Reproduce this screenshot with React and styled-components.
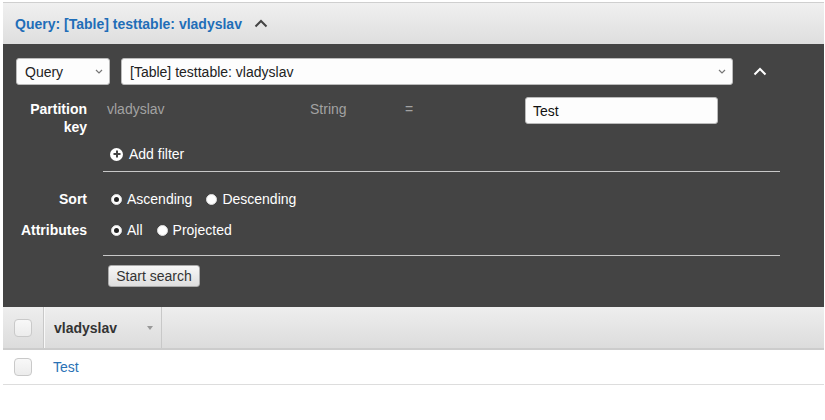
import React from "react";
import styled, { createGlobalStyle } from "styled-components";

const GlobalStyle = createGlobalStyle`
  body {
    margin: 0;
    background: #fff;
    font-family: "Liberation Sans", Arial, sans-serif;
    font-size: 14px;
  }
`;

// Layout
const Page = styled.div`
  padding: 2px 1px 0 3px;
`;

const PanelHeader = styled.div`
  height: 41px;
  border-top: 1px solid #cfcfcf;
  background: linear-gradient(#f0f0f0, #dedede);
  display: flex;
  align-items: center;
  padding-left: 12px;
  gap: 12px;
`;

const Title = styled.span`
  color: #1f6eb8;
  font-weight: bold;
  font-size: 14px;
`;

const Chevron = styled.svg`
  width: 14px;
  height: 9px;
  display: block;
`;

const Dark = styled.div`
  background: #444;
  padding: 14px 0 20px 0;
`;

const SelectRow = styled.div`
  display: flex;
  align-items: center;
  padding-left: 13px;
  gap: 11px;
`;

const Select = styled.div`
  width: ${(p) => p.width}px;
  height: 27px;
  box-sizing: border-box;
  background: #fdfdfd;
  border: 1px solid #bbb;
  border-radius: 3px;
  display: flex;
  align-items: center;
  justify-content: space-between;
  padding: 0 6px 0 8px;
  color: #222;
`;

const CollapseBtn = styled.div`
  margin-left: 8px;
  width: 16px;
  display: flex;
  justify-content: center;
`;

const FormRow = styled.div`
  display: grid;
  grid-template-columns: 84px 677px;
  column-gap: 16px;
  margin-top: ${(p) => p.top || 0}px;
  align-items: ${(p) => (p.start ? "start" : "center")};
`;

const Label = styled.div`
  color: #fff;
  font-weight: bold;
  text-align: right;
  line-height: 18px;
  padding-top: ${(p) => p.pad || 0}px;
`;

const KeyRow = styled.div`
  display: grid;
  grid-template-columns: 203px 95px 120px 193px;
  align-items: start;
  padding-left: 4px;
`;

const Muted = styled.span`
  color: #a2a2a2;
  line-height: 18px;
  padding-top: 3px;
`;

const TextInput = styled.div`
  height: 27px;
  box-sizing: border-box;
  background: #fdfdfd;
  border: 1px solid #bbb;
  border-radius: 3px;
  display: flex;
  align-items: center;
  padding-left: 7px;
  color: #111;
`;

const AddFilter = styled.div`
  display: flex;
  align-items: center;
  gap: 6px;
  color: #fff;
  line-height: 18px;
  padding-left: 7px;
`;

const PlusIcon = styled.span`
  width: 13px;
  height: 13px;
  border-radius: 50%;
  background: #fff;
  position: relative;
  &::before,
  &::after {
    content: "";
    position: absolute;
    background: #444;
    left: 50%;
    top: 50%;
    transform: translate(-50%, -50%);
  }
  &::before {
    width: 7px;
    height: 2px;
  }
  &::after {
    width: 2px;
    height: 7px;
  }
`;

const Rule = styled.div`
  height: 1px;
  background: #c8c8c8;
`;

const Radios = styled.div`
  display: flex;
  align-items: center;
  padding-left: 8px;
  color: #fff;
  line-height: 18px;
`;

const RadioItem = styled.label`
  display: flex;
  align-items: center;
  gap: 5px;
  margin-right: 14px;
`;

const Radio = styled.span`
  width: 11px;
  height: 11px;
  box-sizing: border-box;
  border-radius: 50%;
  background: #fff;
  border: 1px solid #ddd;
  position: relative;
  ${(p) =>
    p.checked &&
    `
    &::after {
      content: "";
      position: absolute;
      left: 2px; top: 2px;
      width: 5px; height: 5px;
      border-radius: 50%;
      background: #222;
    }
  `}
`;

const Button = styled.button`
  margin-left: 5px;
  width: 92px;
  height: 22px;
  border: 1px solid #aaa;
  border-radius: 3px;
  background: linear-gradient(#f7f7f7, #dedede);
  color: #333;
  font-family: inherit;
  font-size: 14px;
  padding: 0;
`;

const ButtonRow = styled.div`
  margin-top: 9px;
`;

// Table
const TableHead = styled.div`
  height: 41px;
  background: linear-gradient(#eeeeee, #dcdcdc);
  border-bottom: 2px solid #cccccc;
  display: flex;
  align-items: stretch;
`;

const CheckCell = styled.div`
  width: 40px;
  display: flex;
  align-items: center;
  justify-content: center;
  border-right: ${(p) => (p.head ? "1px solid #c8c8c8" : "none")};
  box-shadow: ${(p) => (p.head ? "1px 0 0 #f8f8f8" : "none")};
`;

const Checkbox = styled.span`
  width: 18px;
  height: 18px;
  box-sizing: border-box;
  border: 1px solid #c9c9c9;
  border-radius: 4px;
  background: linear-gradient(#f8f8f8, #ececec);
`;

const HeadCell = styled.div`
  width: 118px;
  display: flex;
  align-items: center;
  justify-content: space-between;
  padding: 0 8px 0 10px;
  box-sizing: border-box;
  border-right: 1px solid #c8c8c8;
  font-weight: bold;
  color: #333;
`;

const Caret = styled.span`
  width: 0;
  height: 0;
  border-left: 3px solid transparent;
  border-right: 3px solid transparent;
  border-top: 4px solid #999;
`;

const BodyRow = styled.div`
  height: 34px;
  border-bottom: 1px solid #dddddd;
  display: flex;
  align-items: center;
`;

const LinkCell = styled.span`
  padding-left: 10px;
  color: #2a72b5;
`;

const Down = () => (
  <svg width="8" height="5" viewBox="0 0 8 5">
    <path d="M1 1l3 3 3-3" fill="none" stroke="#777" strokeWidth="1.2" />
  </svg>
);

const App = () => {
  return (
    <Page>
      <GlobalStyle />
      <PanelHeader>
        <Title>Query: [Table] testtable: vladyslav</Title>
        <Chevron viewBox="0 0 14 9">
          <path d="M1.5 7.5L7 2l5.5 5.5" fill="none" stroke="#444" strokeWidth="2" />
        </Chevron>
      </PanelHeader>

      <Dark>
        <SelectRow>
          <Select width={94}>
            Query <Down />
          </Select>
          <Select width={612}>
            [Table] testtable: vladyslav <Down />
          </Select>
          <CollapseBtn>
            <Chevron viewBox="0 0 14 9">
              <path d="M1.5 7.5L7 2l5.5 5.5" fill="none" stroke="#fff" strokeWidth="2" />
            </Chevron>
          </CollapseBtn>
        </SelectRow>

        <FormRow top={12} start>
          <Label pad={3}>
            Partition
            <br />
            key
          </Label>
          <KeyRow>
            <Muted>vladyslav</Muted>
            <Muted>String</Muted>
            <Muted>=</Muted>
            <TextInput>Test</TextInput>
          </KeyRow>
        </FormRow>

        <FormRow top={9}>
          <span />
          <AddFilter>
            <PlusIcon />
            Add filter
          </AddFilter>
        </FormRow>

        <FormRow top={8}>
          <span />
          <Rule />
        </FormRow>

        <FormRow top={18}>
          <Label>Sort</Label>
          <Radios>
            <RadioItem>
              <Radio checked />
              Ascending
            </RadioItem>
            <RadioItem>
              <Radio />
              Descending
            </RadioItem>
          </Radios>
        </FormRow>

        <FormRow top={13}>
          <Label>Attributes</Label>
          <Radios>
            <RadioItem>
              <Radio checked />
              All
            </RadioItem>
            <RadioItem>
              <Radio />
              Projected
            </RadioItem>
          </Radios>
        </FormRow>

        <FormRow top={16}>
          <span />
          <Rule />
        </FormRow>

        <FormRow>
          <span />
          <ButtonRow>
            <Button>Start search</Button>
          </ButtonRow>
        </FormRow>
      </Dark>

      <TableHead>
        <CheckCell head>
          <Checkbox />
        </CheckCell>
        <HeadCell>
          vladyslav
          <Caret />
        </HeadCell>
      </TableHead>
      <BodyRow>
        <CheckCell>
          <Checkbox />
        </CheckCell>
        <LinkCell>Test</LinkCell>
      </BodyRow>
    </Page>
  );
};

export default App;
